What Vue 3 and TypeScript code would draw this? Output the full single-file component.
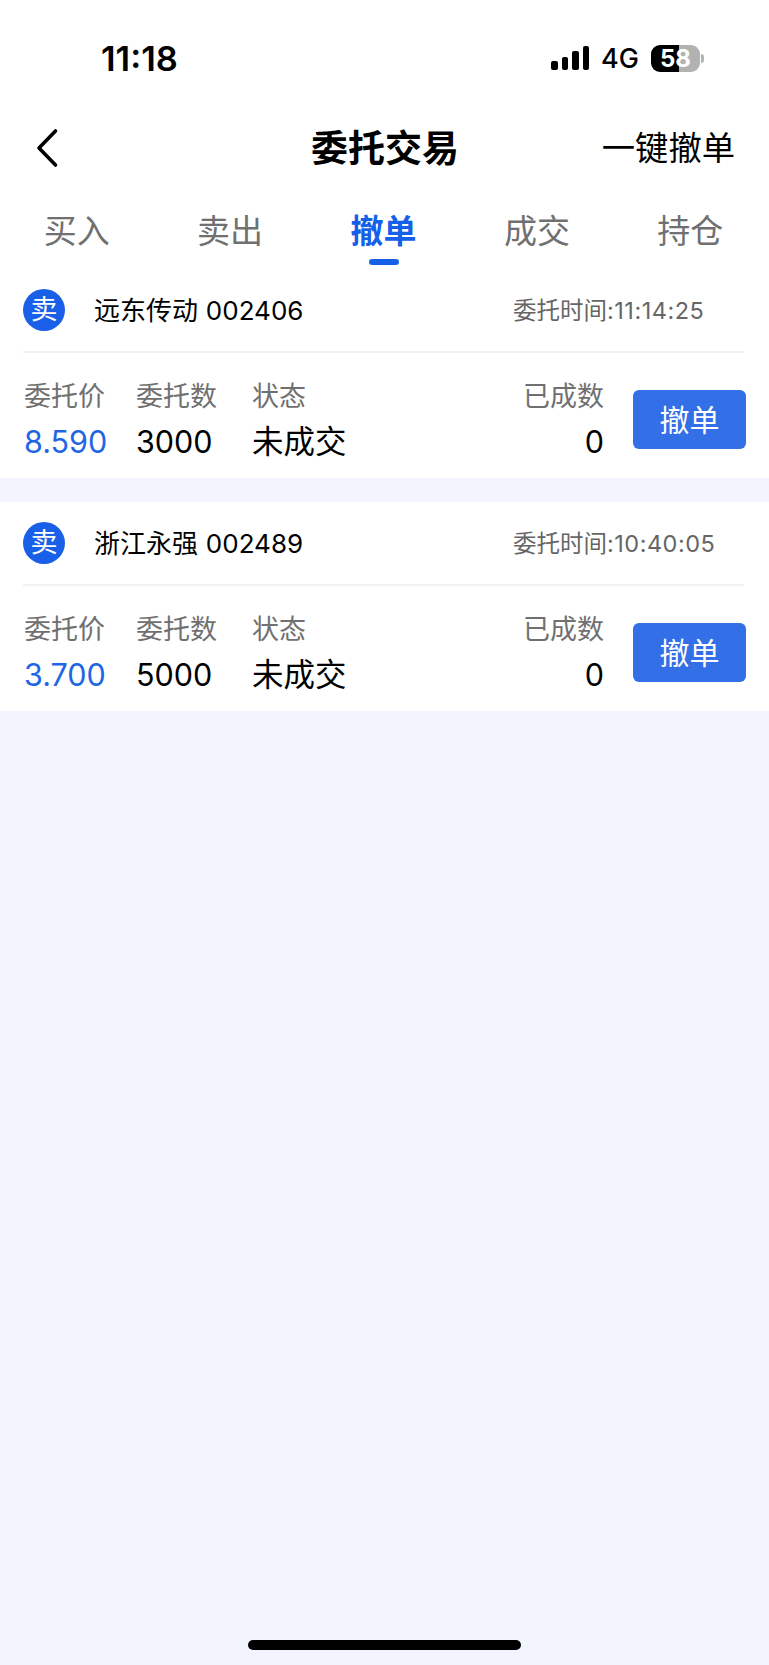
<script setup lang="ts">
import { ref } from 'vue'

const tabs = ['买入', '卖出', '撤单', '成交', '持仓']
const activeTab = ref(2)

const orders = [
  { name: '远东传动', code: '002406', time: '11:14:25', price: '8.590', amount: '3000', status: '未成交', filled: '0' },
  { name: '浙江永强', code: '002489', time: '10:40:05', price: '3.700', amount: '5000', status: '未成交', filled: '0' },
]
</script>

<template>
  <div class="page">
    <div class="top">
      <div class="status">
        <span class="clock">11:18</span>
        <div class="status-right">
          <div class="signal">
            <i class="bar bar-1" />
            <i class="bar bar-2" />
            <i class="bar bar-3" />
            <i class="bar bar-4" />
          </div>
          <span class="net">4G</span>
          <div class="battery">58</div>
          <i class="nib" />
        </div>
      </div>

      <div class="nav">
        <svg class="back" width="24" height="40" viewBox="0 0 24 40">
          <path d="M20.5 3 L4 20 L20.5 37" fill="none" stroke="#000" stroke-width="3.6" stroke-linecap="round" stroke-linejoin="round" />
        </svg>
        <div class="title">委托交易</div>
        <div class="cancel-all">一键撤单</div>
      </div>

      <div class="tabs">
        <div
          v-for="(tab, i) in tabs"
          :key="tab"
          class="tab"
          :class="{ active: i === activeTab }"
          @click="activeTab = i"
        >
          <span>{{ tab }}</span>
          <i class="line" />
        </div>
      </div>
    </div>

    <div class="list">
      <div v-for="item in orders" :key="item.code" class="card">
        <div class="head">
          <span class="badge">卖</span>
          <span class="name">{{ item.name }} <span class="num">{{ item.code }}</span></span>
          <span class="time">委托时间<span class="num">:{{ item.time }}</span></span>
        </div>
        <div class="body">
          <div class="col col-price">
            <div class="label">委托价</div>
            <div class="value price num">{{ item.price }}</div>
          </div>
          <div class="col col-amount">
            <div class="label">委托数</div>
            <div class="value num">{{ item.amount }}</div>
          </div>
          <div class="col col-status">
            <div class="label">状态</div>
            <div class="value">{{ item.status }}</div>
          </div>
          <div class="col col-filled">
            <div class="label">已成数</div>
            <div class="value num">{{ item.filled }}</div>
          </div>
          <button class="btn">撤单</button>
        </div>
      </div>
    </div>

    <i class="home-bar" />
  </div>
</template>

<style>
html,
body {
  margin: 0;
  background: #f2f5fd;
}
</style>

<style scoped>
.page {
  position: relative;
  width: 769px;
  height: 1665px;
  overflow: hidden;
  background: #f2f5fd;
  color: #000;
  font-family: "Noto Sans CJK SC", "Inter", sans-serif;
}
.num {
  font-family: "Inter", "Noto Sans CJK SC", sans-serif;
}
.top {
  background: #fff;
}
.status {
  height: 116px;
  display: flex;
  align-items: center;
  padding-left: 101px;
  padding-right: 65px;
}
.clock {
  font-family: "Inter", sans-serif;
  font-size: 34.5px;
  font-weight: 600;
}
.status-right {
  margin-left: auto;
  display: flex;
  align-items: center;
}
.signal {
  display: flex;
  align-items: flex-end;
  gap: 4px;
  height: 24px;
}
.bar {
  width: 6.5px;
  border-radius: 2px;
  background: #000;
}
.bar-1 { height: 9px; }
.bar-2 { height: 13px; }
.bar-3 { height: 19px; }
.bar-4 { height: 24px; }
.net {
  margin-left: 12px;
  font-family: "Inter", sans-serif;
  font-size: 27px;
  font-weight: 500;
}
.battery {
  margin-left: 12px;
  width: 49px;
  height: 27px;
  border-radius: 9px;
  background: linear-gradient(90deg, #000 57%, #b2b2b2 57%);
  color: #fff;
  font-family: "Inter", sans-serif;
  font-size: 24px;
  font-weight: 700;
  line-height: 27px;
  text-align: center;
}
.nib {
  width: 3px;
  height: 9px;
  margin-left: 1px;
  border-radius: 0 3px 3px 0;
  background: #b2b2b2;
}
.nav {
  height: 64px;
  display: flex;
  align-items: center;
  padding: 0 34px 0 35px;
}
.back {
  width: 24px;
  height: 40px;
}
.title {
  margin-left: 252px;
  padding-bottom: 5px;
  font-size: 37px;
  font-weight: 700;
  line-height: 50px;
}
.cancel-all {
  margin-left: auto;
  padding-bottom: 4px;
  font-size: 33.3px;
  line-height: 50px;
}
.tabs {
  display: flex;
  height: 89px;
  padding-right: 2px;
}
.tab {
  flex: 1;
  display: flex;
  flex-direction: column;
  align-items: center;
  padding-top: 29px;
  color: #707070;
  font-size: 33px;
  line-height: 40px;
}
.tab .line {
  width: 30px;
  height: 6px;
  margin-top: 10px;
  border-radius: 3px;
}
.tab.active {
  color: #1560e8;
  font-weight: 700;
}
.tab.active .line {
  background: #1560e8;
}
.card {
  background: #fff;
  margin-bottom: 24px;
}
.head {
  display: flex;
  align-items: center;
  height: 82px;
  margin: 0 25px 0 23px;
  border-bottom: 2px solid #f2f2f2;
}
.badge {
  width: 42px;
  height: 42px;
  border-radius: 50%;
  background: #1a5fe8;
  color: #fff;
  font-size: 27px;
  line-height: 38px;
  text-align: center;
}
.name {
  margin-left: 29px;
  padding-bottom: 4px;
  font-size: 26px;
  word-spacing: 2px;
}
.time {
  margin-left: auto;
  width: 231px;
  padding-bottom: 3px;
  color: #666;
  font-size: 23.5px;
}
.time .num {
  letter-spacing: 0.5px;
}
.body {
  display: flex;
  height: 125px;
  padding: 24px 23px 0 24px;
  box-sizing: border-box;
}
.col-price { width: 112px; }
.col-amount { width: 116px; }
.col-filled {
  margin-left: auto;
  text-align: right;
}
.label {
  color: #707070;
  font-size: 27px;
  line-height: 36px;
}
.value {
  margin-top: 4px;
  font-size: 31.5px;
  line-height: 44px;
}
.value.num {
  margin-top: 7px;
  font-size: 30.5px;
}
.price {
  color: #1f66e5;
}
.btn {
  width: 113px;
  height: 59px;
  margin: 13px 0 0 29px;
  padding: 0 0 4px;
  border: 0;
  border-radius: 6px;
  background: #336fe6;
  color: #fff;
  font-family: inherit;
  font-size: 30px;
}
.home-bar {
  position: absolute;
  left: 248px;
  bottom: 15px;
  width: 273px;
  height: 10px;
  border-radius: 5px;
  background: #000;
}
</style>
